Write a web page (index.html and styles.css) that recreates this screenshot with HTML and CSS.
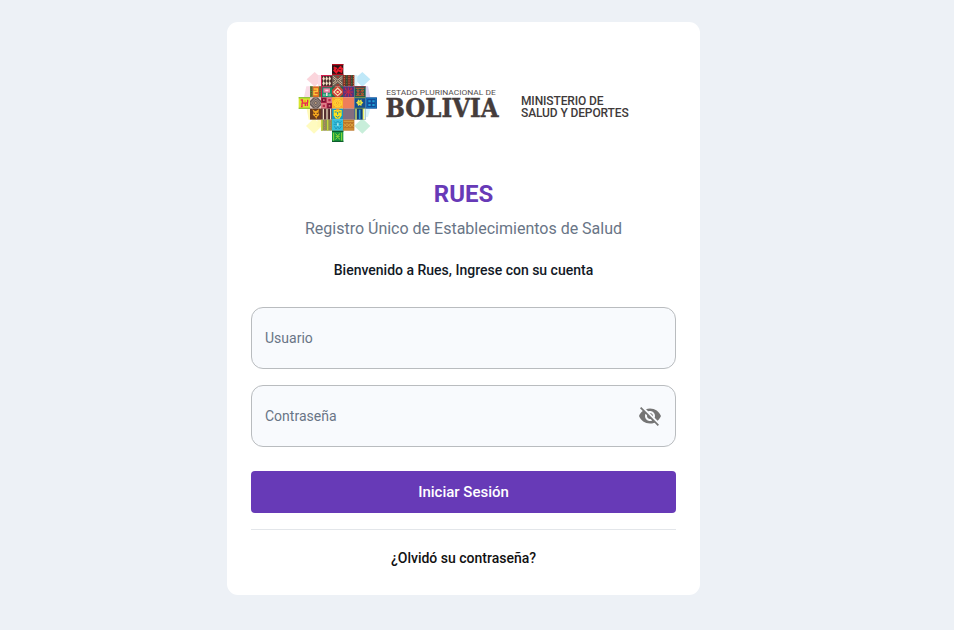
FILE: index.html
```html
<!DOCTYPE html>
<html lang="es">
<head>
<meta charset="utf-8">
<title>RUES</title>
<link rel="stylesheet" href="styles.css">
</head>
<body>
<main class="card">
  <header class="brand">
    <svg class="emblem" viewBox="0 0 270 258" aria-hidden="true">
      <path fill="#fbd5dc" d="M68 36l24 22-24 22-24-22z"/>
      <path fill="#bfe8f8" d="M211 36l24 22-24 22-24-22z"/>
      <path fill="#fffbc0" d="M66 175l24 23-24 23-24-23z"/>
      <path fill="#c8eeda" d="M211 175l24 23-24 23-24-23z"/>
      <path fill="#f9dce6" d="M43 79h11v33H36zM78 45h9v34h-9z"/>
      <path fill="#d9d0ee" d="M221 79h7l7 33h-14z"/>
      <path fill="#d9f4fb" d="M221 146h14l-7 25h-7zM187 45h9v34h-9z"/>
      <path fill="#fff9b8" d="M44 146h10v33h-4zM76 179h11v22h-11z"/>

      <g transform="translate(120 12)"><path fill="#2a1214" d="M0 0h34v33H0z"/><path fill="#b50d1e" d="M0 0h34v4H0zM0 29h34v4H0z"/><path fill="none" stroke="#ee1c2c" stroke-width="6" d="M5 10l7 3-5 6 6 6 5-7 10 5 2-9-7-2 5-5"/></g>

      <g transform="translate(87 45)"><path fill="#4a2d2a" d="M0 0h34v34H0z"/><path fill="#d61d50" d="M0 0h3v34H0zM0 0h34v3H0z"/><path fill="#f4e5c9" d="M8 4l4 7-4 7-4-7zM17 4l4 7-4 7-4-7zM26 4l4 7-4 7-4-7zM8 18l4 7-4 7-4-7zM17 18l4 7-4 7-4-7zM26 18l4 7-4 7-4-7z"/></g>
      <g transform="translate(120 45)"><path fill="#6b5a50" d="M0 0h34v34H0z"/><path fill="none" stroke="#cdb89c" stroke-width="3" d="M3 4l14 11L31 4M3 30l14-11 14 11M3 10l9 7-9 7M31 10l-9 7 9 7"/><path fill="#a33b2d" d="M14 3h7v5h-7zM14 27h7v5h-7z"/></g>
      <g transform="translate(153 45)"><path fill="#762f2c" d="M0 0h34v34H0z"/><path fill="#3b4830" d="M8 0h6v34H8zM24 0h5v34h-5z"/><path fill="none" stroke="#d96a30" stroke-width="3" stroke-dasharray="4 3" d="M4 2v32M18 2v32M32 2v32"/><path stroke="#5a8852" stroke-width="2" stroke-dasharray="4 4" d="M11 0v34M26 0v34"/></g>

      <g transform="translate(54 79)"><path fill="#da6a26" d="M0 0h34v33H0z"/><path fill="#4a8a45" d="M0 0h8v33H0zM27 0h7v33h-7z"/><path fill="none" stroke="#8d2922" stroke-width="3" d="M4 3v28M30 3v28" stroke-dasharray="4 3"/><path fill="none" stroke="#ffc63d" stroke-width="4" d="M11 8h11v7H12v10h11"/></g>
      <g transform="translate(87 79)"><path fill="#168b69" d="M0 0h34v33H0z"/><path fill="#d4174b" d="M0 0h3v33H0zM0 0h34v3H0z"/><path fill="#ef7ca0" d="M7 6h20v13H7z"/><path fill="#f8dce3" d="M13 10h9v5h-9zM15 19h5v10h-5z"/><path fill="#5cc496" d="M6 22h8v8H6zM22 22h8v8h-8z"/></g>
      <g transform="translate(120 79)"><path fill="#c94535" d="M0 0h34v33H0z"/><path fill="#236650" d="M0 0h11L0 11zM34 0v11L23 0zM0 33V22l11 11zM34 33H23l11-11z"/><path fill="#f4e2bc" d="M17 3l14 14-14 13L3 17z"/><path fill="#d72f3b" d="M17 8l9 9-9 8-9-8z"/><path fill="#ffe48a" d="M14 14h6v6h-6z"/></g>
      <g transform="translate(153 79)"><path fill="#57327e" d="M0 0h34v33H0z"/><path fill="none" stroke="#cb2945" stroke-width="3" d="M5 6l22 21M5 27L27 6M16 3v28M3 17h27M8 4v7M24 4v7M8 23v7M24 23v7"/></g>
      <g transform="translate(187 79)"><path fill="#175e4d" d="M0 0h34v33H0z"/><path fill="none" stroke="#c65630" stroke-width="3" d="M4 6h26M4 28h26M8 11h6v4H8zM21 11h6v4h-6zM8 20h6v4H8zM21 20h6v4h-6z"/><path fill="#8e253a" d="M0 0h34v3H0zM15 14h5v6h-5z"/></g>

      <g transform="translate(20 112)"><path fill="#d9e52c" d="M0 0h34v34H0z"/><path fill="#75b92d" d="M0 0h34v3H0zM0 31h34v3H0z"/><path fill="none" stroke="#ec2850" stroke-width="4" d="M6 8h5v9h15v9M10 17v10M20 17v9M27 7v9M7 28h5"/><path fill="#f7a91e" d="M14 9h8v6h-8z"/></g>
      <g transform="translate(54 112)"><path fill="#675a57" d="M0 0h34v34H0z"/><path fill="#e4cdc4" d="M0 0h11L0 11zM23 0h11v11zM0 23l11 11H0zM34 23v11H23z"/><path fill="none" stroke="#c1afa7" stroke-width="2" d="M17 2l15 15-15 15L2 17zM17 8l9 9-9 9-9-9z"/><path fill="#bc9d80" d="M17 13l4 4-4 4-4-4z"/></g>
      <g transform="translate(87 112)"><path fill="#a81e43" d="M0 0h34v34H0z"/><path fill="#de7d87" d="M17 0h17v17H17zM0 17h17v17H0z"/><path fill="#731532" d="M3 3h11v11H3zM20 20h11v11H20z"/><path fill="#cf6a7a" d="M6 6h5v5H6zM23 23h5v5h-5z"/><path fill="#b72847" d="M22 5h7v7h-7zM5 22h7v7H5z"/></g>
      <g transform="translate(120 112)"><path fill="#fbb52a" d="M0 0h34v34H0z"/><circle cx="17" cy="17" r="13" fill="#ffdb36"/><g fill="none" stroke="#f3882a" stroke-width="2"><circle cx="17" cy="17" r="9" stroke-dasharray="3 2"/><circle cx="17" cy="17" r="4"/><path d="M3 3l6 6M31 3l-6 6M3 31l6-6M31 31l-6-6"/></g></g>
      <g transform="translate(153 112)"><path fill="#f17858" d="M0 0h34v34H0z"/><path stroke="#e8a36a" stroke-width="1" d="M0 5h34M0 11h34M0 17h34M0 23h34M0 29h34"/></g>
      <g transform="translate(187 112)"><path fill="#164f8f" d="M0 0h34v34H0z"/><path fill="#7d9c3d" d="M0 0h34v3H0zM0 31h34v3H0z"/><path fill="#f0e542" d="M11 6l5 4 5-4 1 6 5 4-5 4-1 6-5-3-5 3-1-6-5-4 5-4z"/><path fill="#a9c94b" d="M13 13h7v7h-7z"/></g>
      <g transform="translate(221 112)"><path fill="#134a96" d="M0 0h34v34H0z"/><path fill="none" stroke="#1678bd" stroke-width="3" d="M3 3h28v28H3z"/><path fill="#20a1d7" d="M8 9h7v6H8zM20 9h7v6h-7zM8 20h7v6H8zM20 20h7v6h-7z"/></g>

      <g transform="translate(54 146)"><path fill="#6a3a20" d="M0 0h34v33H0z"/><path fill="#f2a51f" d="M7 2l8 5 4-1 8-4-2 11 3 5-7 7-2 7-3-7-8-7 3-6z"/><path fill="#834717" d="M11 12h4v4h-4zM20 12h4v4h-4zM15 19h5v3h-5z"/></g>
      <g transform="translate(87 146)"><path fill="#47252a" d="M0 0h34v33H0z"/><path stroke="#f0dec0" stroke-width="4" d="M7 0v33M18 0v33M29 0v33"/><path stroke="#a16756" stroke-width="1" d="M2 0v33M12 0v33M23 0v33"/></g>
      <g transform="translate(120 146)"><path fill="#159cc5" d="M0 0h34v33H0z"/><path fill="#ffe21b" d="M5 4h24v16l-6 10H11L5 20z"/><path fill="none" stroke="#168ba4" stroke-width="3" d="M8 10h6M20 10h6M17 10v8M11 22l6 4 6-4"/><path fill="#f1922b" d="M12 0h10v5H12z"/></g>
      <g transform="translate(153 146)"><path fill="#625378" d="M0 0h34v33H0z"/><path stroke="#c9a78e" stroke-width="2" d="M3 0v33M9 0v33M15 0v33M21 0v33M27 0v33M33 0v33"/></g>
      <g transform="translate(187 146)"><path fill="#123e77" d="M0 0h34v33H0z"/><path fill="#ecef68" d="M3 0h4v33H3zM25 0h4v33h-4z"/><path fill="#d8f0ea" d="M29 0h5v33h-5z"/><path stroke="#229ac9" stroke-width="5" d="M16 3v28"/></g>

      <g transform="translate(87 179)"><path fill="#8c9453" d="M0 0h34v33H0z"/><path fill="#c6d53d" d="M0 0h5v33H0zM18 0h4v33h-4z"/><path stroke="#c9746d" stroke-width="3" stroke-dasharray="4 3" d="M11 1v31M28 1v31"/></g>
      <g transform="translate(120 179)"><path fill="#36bfdc" d="M0 0h34v33H0z"/><path fill="none" stroke="#1b8fb5" stroke-width="2.5" d="M5 5l6 5 6-6 6 6 6-5M5 14h24M7 20l5 8 5-7 5 7 6-8"/><path fill="#a8e6e8" d="M15 11h5v7h-5z"/></g>
      <g transform="translate(153 179)"><path fill="#bd7628" d="M0 0h34v33H0z"/><path fill="none" stroke="#edbb4b" stroke-width="2" d="M2 5h30M2 28h30M2 12l5 4 5-4 5 4 5-4 5 4 5-4M2 21l5-4 5 4 5-4 5 4 5-4 5 4"/></g>
      <g transform="translate(120 212)"><path fill="#16983f" d="M0 0h34v34H0z"/><path fill="#0e5d2c" d="M0 0h34v4H0zM0 30h34v4H0z"/><path fill="none" stroke="#9bdc38" stroke-width="3" d="M5 6v24M29 6v24M10 9l7 6 7-6M10 26l7-6 7 6M11 17h12"/></g>
    </svg>
    <svg class="wordmark" viewBox="0 0 114 34">
      <text class="wordmark-small" x="0.3" y="8.3" textLength="109.5" lengthAdjust="spacingAndGlyphs">ESTADO PLURINACIONAL DE</text>
      <text class="wordmark-big" x="-0.5" y="29.6" textLength="113" lengthAdjust="spacingAndGlyphs">BOLIVIA</text>
    </svg>
    <p class="ministry">MINISTERIO DE<br>SALUD Y DEPORTES</p>
  </header>
  <h1 class="title">RUES</h1>
  <p class="subtitle">Registro Único de Establecimientos de Salud</p>
  <p class="welcome">Bienvenido a Rues, Ingrese con su cuenta</p>
  <form class="form">
    <div class="field">
      <input class="input" type="text" placeholder="Usuario">
    </div>
    <div class="field">
      <input class="input" type="password" placeholder="Contraseña">
      <svg class="eye" viewBox="0 0 24 24" aria-hidden="true"><path d="M12 7c2.76 0 5 2.24 5 5 0 .65-.13 1.26-.36 1.83l2.92 2.92c1.51-1.26 2.7-2.89 3.43-4.75-1.73-4.39-6-7.5-11-7.5-1.4 0-2.74.25-3.98.7l2.16 2.16C10.74 7.13 11.35 7 12 7zM2 4.27l2.28 2.28.46.46C3.08 8.3 1.78 10.02 1 12c1.73 4.39 6 7.5 11 7.5 1.55 0 3.03-.3 4.38-.84l.42.42L19.73 22 21 20.73 3.27 3 2 4.27zM7.53 9.8l1.55 1.55c-.05.21-.08.43-.08.65 0 1.66 1.34 3 3 3 .22 0 .44-.03.65-.08l1.55 1.55c-.67.33-1.41.53-2.2.53-2.76 0-5-2.24-5-5 0-.79.2-1.53.53-2.2zm4.31-.78l3.15 3.15.02-.16c0-1.66-1.34-3-3-3l-.17.01z"/></svg>
    </div>
    <button class="submit" type="button">Iniciar Sesión</button>
  </form>
  <footer class="footer"><a class="forgot">¿Olvidó su contraseña?</a></footer>
</main>
</body>
</html>
```

FILE: styles.css
```css
* { box-sizing: border-box; }

body {
  margin: 0;
  min-height: 630px;
  padding-top: 22px;
  background: #edf1f6;
  font-family: Roboto, "Liberation Sans", sans-serif;
}

.card {
  width: 473px;
  height: 573px;
  margin: 0 auto 0 227px;
  padding: 38px 24px 0;
  background: #fff;
  border-radius: 11px;
}

.brand {
  display: flex;
  height: 86px;
  padding-left: 41px;
}

.emblem { width: 90px; height: 86px; }

.wordmark {
  width: 114px;
  height: 34px;
  margin: 27px 0 0 4px;
  overflow: visible;
}

.wordmark-small {
  font: 400 8px Roboto, sans-serif;
  fill: #554f4e;
}

.wordmark-big {
  font: bold 25.6px "DejaVu Serif Condensed", "DejaVu Serif", serif;
  fill: #453c3b;
  stroke: #453c3b;
  stroke-width: 0.4px;
}

.ministry {
  margin: 36px 0 0 21px;
  font-size: 12px;
  font-weight: 500;
  line-height: 11.5px;
  letter-spacing: -0.12px;
  color: #403a3a;
  white-space: nowrap;
}

.title {
  margin: 32px 0 0;
  font-size: 24px;
  font-weight: 700;
  line-height: 32px;
  text-align: center;
  color: #673ab7;
}

.subtitle {
  margin: 5px 0 0;
  font-size: 16px;
  line-height: 28px;
  text-align: center;
  color: #697586;
}

.welcome {
  margin: 17px 0 0;
  font-size: 14px;
  font-weight: 500;
  line-height: 20px;
  text-align: center;
  color: #121926;
}

.form {
  display: flex;
  flex-direction: column;
  gap: 16px;
  margin-top: 27px;
}

.field {
  display: flex;
  align-items: center;
  height: 62px;
  padding: 0 13px;
  background: #f8fafd;
  border: 1px solid #b9bcbf;
  border-radius: 12px;
}

.input {
  flex: 1;
  min-width: 0;
  padding: 0;
  border: 0;
  outline: 0;
  background: none;
  font: 400 14px Roboto, sans-serif;
}

.input::placeholder { color: #697586; opacity: 1; }

.eye { width: 24px; height: 24px; fill: #757575; }

.submit {
  height: 42px;
  margin-top: 8px;
  padding: 0;
  border: 0;
  border-radius: 4px;
  background: #673ab7;
  color: #fff;
  font: 500 15px Roboto, sans-serif;
}

.footer {
  margin-top: 16px;
  padding-top: 17px;
  border-top: 1px solid #e3e6ea;
  text-align: center;
}

.forgot {
  font-size: 14px;
  font-weight: 500;
  line-height: 22px;
  color: #111;
}
```
